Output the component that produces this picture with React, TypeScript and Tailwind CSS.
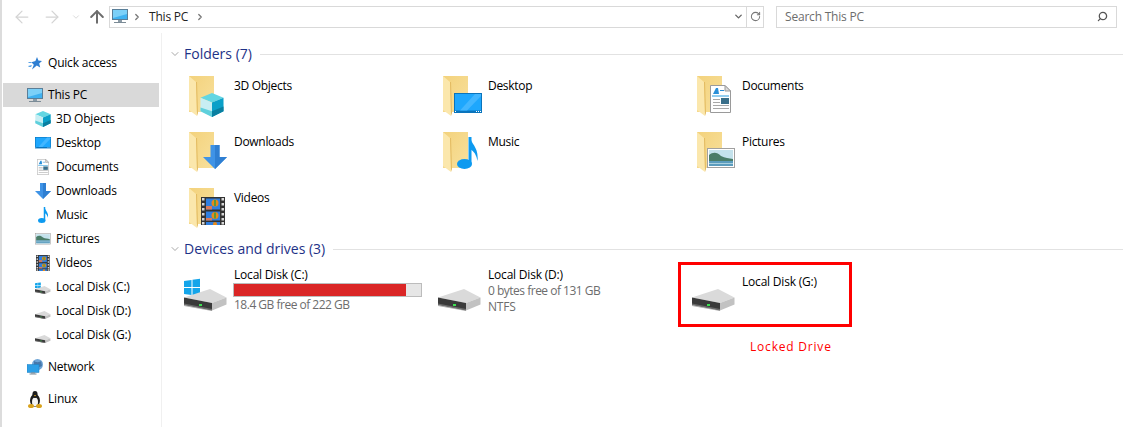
import type { ReactNode } from 'react';
import { ArrowLeft, ArrowRight, ArrowUp, ChevronDown, ChevronRight, RotateCw, Search } from 'lucide-react';

type IconName = '3d' | 'desktop' | 'documents' | 'downloads' | 'music' | 'pictures' | 'videos';

function Cube({ size = 16 }: { size?: number }) {
  return (
    <svg width={size} height={size} viewBox="0 0 24 25" className="shrink-0">
      <polygon points="12,0 24,5 12,10 0,5" fill="#63d6e2" />
      <polygon points="0,5 12,10 12,25 0,19" fill="#c8eef3" />
      <polygon points="0,15 12,19 12,25 0,19" fill="#5fd0dc" />
      <polygon points="12,10 24,5 24,19 12,25" fill="#0ba0c8" />
      <polygon points="12,19 24,14 24,19 12,25" fill="#0a7fa0" />
    </svg>
  );
}

function DesktopGlyph({ size = 16 }: { size?: number }) {
  return (
    <svg width={size} height={(size * 5) / 7} viewBox="0 0 28 20" className="shrink-0">
      <rect width="28" height="20" fill="#0a74bc" />
      <rect x="1" y="1" width="26" height="16.5" fill="#1ea7fd" />
      <polygon points="6,17.5 21,1 27,1 27,3 13,17.5" fill="#42b6ff" />
      <rect x="1" y="18" width="1" height="1" fill="#fff" />
      <rect x="22" y="18" width="1" height="1" fill="#fff" />
      <rect x="24" y="18" width="1" height="1" fill="#fff" />
      <rect x="26" y="18" width="1" height="1" fill="#fff" />
    </svg>
  );
}

function DocGlyph({ size = 16 }: { size?: number }) {
  return (
    <svg width={(size * 21) / 28} height={size} viewBox="0 0 21 28" className="shrink-0">
      <polygon points="0.5,0.5 15,0.5 20.5,6 20.5,27.5 0.5,27.5" fill="#fff" stroke="#9a9a9a" />
      <polygon points="15,0.5 15,6 20.5,6" fill="#dcdcdc" stroke="#9a9a9a" />
      <polygon points="3,9 6,3 8,3 9,9" fill="#2a8fd8" />
      <rect x="10" y="5" width="4" height="1" fill="#2a8fd8" />
      <rect x="2" y="10.5" width="17" height="1" fill="#2a9ee0" />
      <rect x="3" y="14" width="7" height="1" fill="#a8a8a8" />
      <rect x="11" y="13" width="8" height="6" fill="#3a6f8a" />
      <rect x="3" y="17" width="7" height="1" fill="#a8a8a8" />
      <rect x="3" y="20" width="16" height="1" fill="#a8a8a8" />
      <rect x="3" y="23" width="16" height="1" fill="#a8a8a8" />
    </svg>
  );
}

function ArrowGlyph({ size = 16 }: { size?: number }) {
  return (
    <svg width={size} height={size} viewBox="0 0 24 24" className="shrink-0">
      <polygon points="7.5,0 16.5,0 16.5,12 24,12 12,24 0,12 7.5,12" fill="#3f93e6" />
      <polygon points="12,0 16.5,0 16.5,12 24,12 12,24" fill="#2f7fd2" />
    </svg>
  );
}

function NoteGlyph({ size = 16 }: { size?: number }) {
  return (
    <svg width={(size * 21) / 32} height={size} viewBox="0 0 21 32" className="shrink-0">
      <ellipse cx="7.5" cy="27" rx="7.5" ry="5" fill="#0d9af0" />
      <rect x="11.5" y="0" width="3" height="27" fill="#0d9af0" />
      <path d="M13 0 C14 7 22 10 20.5 24 C19.5 18 17 14 13 12 Z" fill="#0d9af0" />
    </svg>
  );
}

function PictureGlyph({ size = 16 }: { size?: number }) {
  return (
    <svg width={size} height={(size * 20) / 28} viewBox="0 0 28 20" className="shrink-0">
      <rect x="0.5" y="0.5" width="27" height="19" fill="#fff" stroke="#a0a0a0" />
      <rect x="2" y="2" width="24" height="16" fill="#c4e2ec" />
      <path d="M2 7 C6 4 10 4 14 8 C18 10 22 10 26 11 L26 13 L2 13 Z" fill="#4a7d68" />
      <rect x="2" y="13" width="24" height="5" fill="#5b9cbd" />
      <rect x="2" y="15" width="24" height="1" fill="#a9cfdf" />
    </svg>
  );
}

function FilmGlyph({ size = 16 }: { size?: number }) {
  return (
    <svg width={(size * 24) / 28} height={size} viewBox="0 0 24 28" className="shrink-0">
      <rect width="24" height="28" fill="#333" />
      {[1, 6, 11, 16, 21, 25].map(y => (
        <g key={y}>
          <rect x="1" y={y} width="2.5" height="2.5" fill="#d8d8d8" />
          <rect x="20.5" y={y} width="2.5" height="2.5" fill="#d8d8d8" />
        </g>
      ))}
      <rect x="5" y="1.5" width="14" height="11" fill="#2f7fe0" />
      <rect x="5" y="14.5" width="14" height="9" fill="#2f7fe0" />
      <rect x="5" y="25" width="14" height="3" fill="#2f7fe0" />
      <rect x="5" y="9" width="6" height="3.5" fill="#d87a5a" />
      <rect x="5" y="21" width="6" height="2.5" fill="#d87a5a" />
      <circle cx="14" cy="6" r="3.5" fill="#e88a18" />
      <rect x="13" y="3" width="2" height="6" fill="#5a9a3a" />
      <circle cx="14" cy="18.5" r="3.5" fill="#e88a18" />
      <rect x="13" y="15.5" width="2" height="6" fill="#5a9a3a" />
      <circle cx="14" cy="27" r="2" fill="#e88a18" />
    </svg>
  );
}

function Glyph({ name, size = 16 }: { name: IconName; size?: number }) {
  if (name === '3d') return <Cube size={size} />;
  if (name === 'desktop') return <DesktopGlyph size={size} />;
  if (name === 'documents') return <DocGlyph size={size} />;
  if (name === 'downloads') return <ArrowGlyph size={size} />;
  if (name === 'music') return <NoteGlyph size={size} />;
  if (name === 'pictures') return <PictureGlyph size={size} />;
  return <FilmGlyph size={size} />;
}

const overlays: Record<IconName, { cls: string; size: number }> = {
  '3d': { cls: 'left-[16px] top-[21px]', size: 24 },
  desktop: { cls: 'left-[16px] top-[21px]', size: 28 },
  documents: { cls: 'left-[18px] top-[13px]', size: 28 },
  downloads: { cls: 'left-[19px] top-[17px]', size: 24 },
  music: { cls: 'left-[19px] top-[9px]', size: 32 },
  pictures: { cls: 'left-[15px] top-[20px]', size: 28 },
  videos: { cls: 'left-[17px] top-[13px]', size: 28 },
};

function FolderIcon({ name }: { name: IconName }) {
  const o = overlays[name];
  return (
    <div className="relative h-[48px] w-[48px] shrink-0">
      <svg width="48" height="48" viewBox="0 0 48 48">
        <defs>
          <linearGradient id="folderBack" x1="0" y1="0" x2="1" y2="1">
            <stop offset="0" stopColor="#f3d27c" />
            <stop offset="1" stopColor="#f8e09c" />
          </linearGradient>
        </defs>
        <rect x="5" y="4" width="25" height="36" fill="url(#folderBack)" />
        <polygon points="5,4 12,10 13,44 5,38" fill="#fbe7ac" />
        <polygon points="12,10 13,10 14,41 13,44" fill="#e3bb62" />
      </svg>
      <div className={`absolute ${o.cls}`}>
        <Glyph name={name} size={o.size} />
      </div>
    </div>
  );
}

function DriveIcon({ size = 44, windows = false }: { size?: number; windows?: boolean }) {
  return (
    <svg width={size} height={(size * 36) / 44} viewBox="0 0 44 36" className="shrink-0">
      {windows && (
        <g fill="#14a5ea">
          <polygon points="0,6 7.5,5 7.5,12 0,12" />
          <polygon points="8.5,4.8 16,3.8 16,12 8.5,12" />
          <polygon points="0,13 7.5,13 7.5,20 0,19" />
          <polygon points="8.5,13 16,13 16,21.2 8.5,20.2" />
        </g>
      )}
      <polygon points="0,22.5 26,14 42.5,22.5 28,28" fill="#dadada" />
      <polygon points="28,28 42.5,22.5 42.5,29.5 28,35.5" fill="#c2c2c2" />
      <polygon points="0,22.5 28,28 28,35.5 0,30" fill="#3a3a3a" />
      <polygon points="0,28.5 28,34 28,35.5 0,30" fill="#6a6a6a" />
      <rect x="15" y="29" width="3" height="2" fill="#3ee052" />
      <polygon points="0,30 28,35.5 28,36 0,31" fill="#a8a8a8" />
    </svg>
  );
}

function MonitorIcon() {
  return (
    <svg width="16" height="15" viewBox="0 0 16 15" className="shrink-0">
      <rect x="0.5" y="0.5" width="15" height="10" fill="#3fb1f0" stroke="#5a7e98" />
      <polygon points="1,1 15,1 15,5 1,9" fill="#7cd0f8" />
      <rect x="6" y="11" width="4" height="2" fill="#8a9aa6" />
      <rect x="2" y="13" width="12" height="1" fill="#7b8b96" />
    </svg>
  );
}

function StarIcon() {
  return (
    <svg width="14" height="13" viewBox="0 0 14 13" className="shrink-0">
      <polygon points="9,0 10.4,3.6 14,4 11.2,6.6 12.2,10.6 8.8,8.6 4,12.6 5.8,7.8 3.4,5.2 7.4,4" fill="#2f7fd2" />
      <polygon points="0,5 4,5 3,6 1,6" fill="#5aa3e6" />
      <polygon points="0,9 4,8 3,10 1,10" fill="#5aa3e6" />
    </svg>
  );
}

function NetworkIcon() {
  return (
    <svg width="16" height="16" viewBox="0 0 16 16" className="shrink-0">
      <circle cx="10.5" cy="5.5" r="5.5" fill="#6ea4d6" />
      <path d="M7 2 C10 4 13 3 14 2 L15 7 C12 9 9 8 7 6 Z" fill="#4678ab" />
      <rect x="0" y="5.5" width="12" height="8" fill="#2d9fe6" stroke="#1f7fc0" strokeWidth="0.5" />
      <rect x="4" y="13.5" width="4" height="1" fill="#7a8a96" />
      <rect x="2.5" y="14.5" width="7" height="1" fill="#7a8a96" />
    </svg>
  );
}

function TuxIcon() {
  return (
    <svg width="14" height="17" viewBox="0 0 14 17" className="shrink-0">
      <ellipse cx="7" cy="9.5" rx="5" ry="6.5" fill="#1c1c1c" />
      <ellipse cx="7" cy="11" rx="3" ry="4.5" fill="#f4f4f4" />
      <ellipse cx="7" cy="3.5" rx="2.6" ry="3.4" fill="#1c1c1c" />
      <polygon points="6,4 8,4 7,5.5" fill="#e8b020" />
      <ellipse cx="3" cy="15" rx="3" ry="2" fill="#d9a21c" />
      <ellipse cx="11" cy="15" rx="3" ry="2" fill="#d9a21c" />
    </svg>
  );
}

function NavRow({ icon, label, indent, selected }: { icon: ReactNode; label: string; indent?: boolean; selected?: boolean }) {
  return (
    <div className={`flex h-[24px] items-center ${indent ? 'pl-[32px]' : 'pl-[24px]'} ${selected ? 'bg-[#d9d9d9]' : ''}`}>
      <div className="w-[21px]">
        <div className="flex w-[16px] justify-center">{icon}</div>
      </div>
      <span className="whitespace-nowrap">{label}</span>
    </div>
  );
}

const folders: { name: IconName; label: string }[] = [
  { name: '3d', label: '3D Objects' },
  { name: 'desktop', label: 'Desktop' },
  { name: 'documents', label: 'Documents' },
  { name: 'downloads', label: 'Downloads' },
  { name: 'music', label: 'Music' },
  { name: 'pictures', label: 'Pictures' },
  { name: 'videos', label: 'Videos' },
];

function SectionHeader({ title }: { title: string }) {
  return (
    <div className="flex h-[20px] items-center">
      <ChevronDown className="-ml-[2px] mr-[3px] h-[12px] w-[12px] text-[#8a8a8a]" strokeWidth={1.5} />
      <span className="mb-[2px] whitespace-nowrap text-[14px] tracking-normal text-[#1e3287]">{title}</span>
      <div className="ml-[8px] h-px flex-1 bg-[#e2e2e2]" />
    </div>
  );
}

export default function App() {
  return (
    <div
      className="flex h-[427px] w-[1130px] flex-col overflow-hidden border-l-[2px] border-l-[#dcdcdc] bg-white text-[12px] tracking-[-0.2px] text-black"
      style={{ fontFamily: '"Open Sans", "Noto Sans", sans-serif' }}
    >
      <div className="flex h-[33px] shrink-0 items-center pl-[10px]">
        <ArrowLeft className="h-[20px] w-[20px] text-[#d4d4d4]" strokeWidth={1.5} />
        <ArrowRight className="ml-[10px] h-[20px] w-[20px] text-[#d4d4d4]" strokeWidth={1.5} />
        <ChevronDown className="ml-[9px] h-[10px] w-[10px] text-[#d4d4d4]" strokeWidth={2} />
        <ArrowUp className="ml-[6px] h-[20px] w-[20px] text-[#6d6d6d]" strokeWidth={2.4} />
        <div className="ml-[2px] flex h-[22px] w-[655px] items-center border border-[#d9d9d9] pl-[2px]">
          <MonitorIcon />
          <ChevronRight className="ml-[4px] h-[10px] w-[10px] text-[#777]" strokeWidth={3} />
          <span className="ml-[7px] text-[#222]">This PC</span>
          <ChevronRight className="ml-[7px] h-[10px] w-[10px] text-[#777]" strokeWidth={3} />
          <div className="ml-auto flex h-full items-center">
            <ChevronDown className="mr-[2px] h-[11px] w-[11px] text-[#666]" strokeWidth={3} />
            <div className="flex h-full w-[17px] items-center justify-center border-l border-[#d9d9d9]">
              <RotateCw className="h-[11px] w-[11px] text-[#777]" strokeWidth={2.2} />
            </div>
          </div>
        </div>
        <div className="ml-[12px] flex h-[22px] w-[341px] items-center justify-between border border-[#d9d9d9] pl-[8px] pr-[8px] text-[#6d6d6d]">
          <span>Search This PC</span>
          <Search className="h-[11px] w-[11px] -scale-x-100 text-[#555]" strokeWidth={2.8} />
        </div>
      </div>

      <div className="flex min-h-0 flex-1">
        <div className="w-[160px] shrink-0 border-r border-r-[#f0f0f0] pl-[1px] pr-[2px] pt-[18px]">
          <NavRow icon={<StarIcon />} label="Quick access" />
          <div className="h-[8px]" />
          <NavRow icon={<MonitorIcon />} label="This PC" selected />
          {folders.map(f => (
            <NavRow key={f.name} indent icon={<Glyph name={f.name} size={16} />} label={f.label} />
          ))}
          <NavRow indent icon={<div className="mt-[1px]"><DriveIcon size={16} windows /></div>} label="Local Disk (C:)" />
          <NavRow indent icon={<div className="mt-[3px]"><DriveIcon size={16} /></div>} label="Local Disk (D:)" />
          <NavRow indent icon={<div className="mt-[3px]"><DriveIcon size={16} /></div>} label="Local Disk (G:)" />
          <div className="h-[8px]" />
          <NavRow icon={<NetworkIcon />} label="Network" />
          <div className="h-[8px]" />
          <NavRow icon={<TuxIcon />} label="Linux" />
        </div>

        <div className="min-w-0 flex-1 pl-[9px] pr-[7px] pt-[11px]">
          <SectionHeader title="Folders (7)" />
          <div className="mt-[8px] grid grid-cols-[254px_254px_254px] pl-[13px]">
            {folders.map(f => (
              <div key={f.label} className="flex h-[56px]">
                <FolderIcon name={f.name} />
                <span className="ml-[2px] mt-[5px] whitespace-nowrap tracking-[-0.3px]">{f.label}</span>
              </div>
            ))}
          </div>
          <div className="-mt-[1px]">
            <SectionHeader title="Devices and drives (3)" />
          </div>
          <div className="mt-[4px] grid grid-cols-[254px_254px_254px] pl-[13px]">
            <div className="flex h-[60px]">
              <div className="w-[50px] pt-[12px]"><DriveIcon windows /></div>
              <div className="pt-[4px]">
                <div className="leading-[16px]">Local Disk (C:)</div>
                <div className="-ml-[1px] h-[14px] w-[189px] border border-[#bcbcbc] bg-[#e6e6e6]">
                  <div className="h-full w-[91.8%] bg-[#da2626]" />
                </div>
                <div className="leading-[16px] tracking-[-0.5px] text-[#6d6d6d]">18.4 GB free of 222 GB</div>
              </div>
            </div>
            <div className="flex h-[60px]">
              <div className="w-[50px] pt-[12px]"><DriveIcon /></div>
              <div className="pt-[4px] text-[#6d6d6d]">
                <div className="leading-[16px] text-black">Local Disk (D:)</div>
                <div className="leading-[16px] tracking-[-0.5px]">0 bytes free of 131 GB</div>
                <div className="leading-[16px]">NTFS</div>
              </div>
            </div>
            <div className="relative flex h-[60px]">
              <div className="w-[50px] pt-[12px]"><DriveIcon /></div>
              <div className="pt-[11px] leading-[16px]">Local Disk (G:)</div>
              <div className="absolute left-[-14px] top-[-1px] h-[65px] w-[174px] border-[3px] border-[#ff0000]" />
              <div className="absolute left-[58px] top-[75px] whitespace-nowrap tracking-[0.8px] text-[#f00]">Locked Drive</div>
            </div>
          </div>
        </div>
      </div>
    </div>
  );
}
